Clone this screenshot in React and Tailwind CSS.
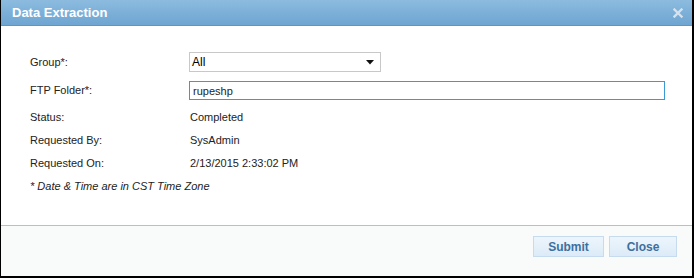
import { useState } from "react";

const rows = [
  { label: "Status:", value: "Completed" },
  { label: "Requested By:", value: "SysAdmin" },
  { label: "Requested On:", value: "2/13/2015 2:33:02 PM" },
];

export default function App() {
  const [folder, setFolder] = useState("rupeshp");

  return (
    <div
      className="w-[694px] h-[278px] bg-white border-l border-r-2 border-b-2 border-black flex flex-col text-[11px] text-[#222]"
      style={{ fontFamily: "Tahoma, 'Liberation Sans', Arial, sans-serif" }}
    >
      {/* title bar */}
      <div className="h-[26px] shrink-0 flex items-center justify-between pl-[11px] pr-[8px] bg-gradient-to-b from-[#8cbbdf] to-[#6ea5d1] border-b border-[#4a9bd9]">
        <span className="text-white font-bold text-[13px] leading-none">Data Extraction</span>
        <svg width="10" height="10" viewBox="0 0 10 10" className="mr-[1px]">
          <path d="M1.5 1.5 L8.5 8.5 M8.5 1.5 L1.5 8.5" stroke="#d6e2ee" strokeWidth="2.3" strokeLinecap="square" />
        </svg>
      </div>

      {/* body */}
      <div className="flex-1 pt-[26px] pl-[29px]">
        <div className="flex items-center h-[20px]">
          <span className="w-[159px]">Group*:</span>
          <div className="w-[192px] h-[20px] border border-[#c8c8c8] flex items-center justify-between pl-[2px] pr-[6px] text-[12px] text-black">
            <span>All</span>
            <svg width="8" height="5" viewBox="0 0 8 5">
              <path d="M0 0 H8 L4 4.5 Z" fill="#111" />
            </svg>
          </div>
        </div>

        <div className="flex items-center h-[19px] mt-[9px]">
          <span className="w-[159px]">FTP Folder*:</span>
          <input
            value={folder}
            onChange={(e) => setFolder(e.target.value)}
            className="w-[476px] h-[19px] border border-[#3a9ad3] pl-[3px] text-[11px] text-[#222] outline-none"
          />
        </div>

        <div className="mt-[6px]">
          {rows.map((r) => (
            <div key={r.label} className="flex items-center h-[23px]">
              <span className="w-[160px]">{r.label}</span>
              <span>{r.value}</span>
            </div>
          ))}
          <div className="h-[22px] flex items-center italic">* Date &amp; Time are in CST Time Zone</div>
        </div>
      </div>

      {/* footer */}
      <div className="h-[51px] shrink-0 border-t border-[#a9c4d9] bg-[#f9fbfb] flex justify-end items-start gap-[5px] pt-[10px] pr-[15px]">
        <button className="w-[71px] h-[21px] border border-[#c6dcee] bg-gradient-to-b from-[#edf5fc] to-[#dcebf8] text-[#3d6f9d] font-bold text-[12px]">
          Submit
        </button>
        <button className="w-[68px] h-[21px] border border-[#c6dcee] bg-gradient-to-b from-[#edf5fc] to-[#dcebf8] text-[#3d6f9d] font-bold text-[12px]">
          Close
        </button>
      </div>
    </div>
  );
}
